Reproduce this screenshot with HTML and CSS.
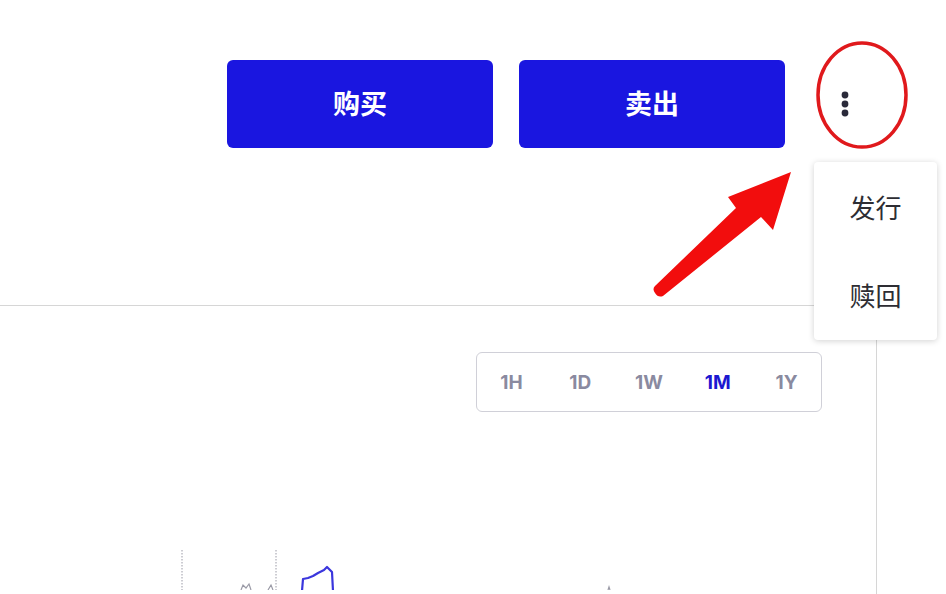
FILE: index.html
```html
<!DOCTYPE html>
<html lang="zh">
<head>
<meta charset="utf-8">
<title>Trade</title>
<link rel="stylesheet" href="styles.css">
</head>
<body>
<div class="page">
  <header class="topbar">
    <button class="btn">购买</button>
    <button class="btn">卖出</button>
    <div class="kebab">
      <svg class="dots" width="12" height="30" viewBox="0 0 12 30"><circle cx="6" cy="6" r="3.4"/><circle cx="6" cy="15" r="3.4"/><circle cx="6" cy="24" r="3.4"/></svg>
    </div>
  </header>
  <section class="panel">
    <div class="range-row">
      <div class="range">
        <span class="opt">1H</span>
        <span class="opt">1D</span>
        <span class="opt">1W</span>
        <span class="opt active">1M</span>
        <span class="opt">1Y</span>
      </div>
    </div>
    <svg class="chart" width="876" height="56" viewBox="0 0 876 56">
      <line class="grid" x1="182" y1="16" x2="182" y2="56"/>
      <line class="grid" x1="276" y1="16" x2="276" y2="56"/>
      <path class="tick" d="M241 56 L243 51 L246 54 L249 50 L251 56 M268 56 L271 51 L273 56 M608 56 L609 53 L610 56"/>
      <path class="series" d="M302 57 L303 45 L308 44 L313 42 L318 39 L324 36 L327 33 L332 38 L333 57"/>
    </svg>
  </section>

  <svg class="ring" width="100" height="116" viewBox="0 0 100 116"><ellipse cx="50" cy="58" rx="44" ry="52"/></svg>
  <svg class="arrow" width="160" height="140" viewBox="0 0 160 140">
    <path d="M22 133 Q19 129 22 126 L103 48 L95 37 L158 12 L140 70 L128 57 L30 136 Q25 138 22 133 Z"/>
  </svg>

  <div class="menu">
    <div class="item">发行</div>
    <div class="item">赎回</div>
  </div>
</div>
</body>
</html>
```
FILE: styles.css
```css
html, body {
  margin: 0;
  padding: 0;
  background: #fff;
}
body {
  font-family: Inter, "Noto Sans CJK SC", sans-serif;
  width: 946px;
  height: 594px;
  overflow: hidden;
}
.page {
  position: relative;
  width: 946px;
  height: 594px;
}
.topbar {
  display: flex;
  justify-content: flex-end;
  align-items: center;
  gap: 26px;
  padding: 60px 65px 0 0;
}
.btn {
  width: 266px;
  height: 88px;
  border: none;
  border-radius: 6px;
  background: #1a16e0;
  color: #fff;
  font-family: "Noto Sans CJK SC", sans-serif;
  font-size: 27px;
  font-weight: 700;
  line-height: 1;
  padding: 0 0 4px;
}
.kebab {
  width: 70px;
  height: 88px;
  display: flex;
  align-items: center;
  justify-content: center;
}
.dots {
  fill: #2a2a3a;
  margin-left: -2px;
}
.panel {
  margin-top: 157px;
  width: 876px;
  height: 288px;
  border-top: 1px solid #d6d6d6;
  border-right: 1px solid #d6d6d6;
}
.range-row {
  display: flex;
  justify-content: flex-end;
  padding: 46px 54px 0 0;
}
.range {
  box-sizing: border-box;
  width: 346px;
  display: flex;
  border: 1px solid #d0d0d8;
  border-radius: 6px;
  height: 60px;
  align-items: center;
}
.opt {
  flex: 1;
  text-align: center;
  font-size: 19px;
  font-weight: 700;
  color: #8a8aa0;
}
.opt.active {
  color: #1c18d0;
}
.chart {
  display: block;
  margin-top: 122px;
}
.grid {
  stroke: #9a9aa6;
  stroke-width: 1;
  stroke-dasharray: 1.5 1.5;
}
.tick {
  stroke: #9a9aa6;
  stroke-width: 1.2;
  fill: none;
}
.series {
  stroke: #3a36dd;
  stroke-width: 2.2;
  fill: none;
  stroke-linejoin: round;
}
.ring {
  position: absolute;
  left: 812px;
  top: 37px;
  fill: none;
  stroke: #e0191c;
  stroke-width: 3.5;
}
.arrow {
  position: absolute;
  left: 633px;
  top: 160px;
  fill: #f20d0d;
}
.menu {
  position: absolute;
  left: 814px;
  top: 162px;
  width: 123px;
  height: 178px;
  background: #fff;
  border-radius: 4px;
  box-shadow: 0 1px 6px rgba(0, 0, 0, 0.18);
  display: flex;
  flex-direction: column;
  justify-content: center;
  gap: 52px;
}
.item {
  text-align: center;
  font-family: "Noto Sans CJK SC", sans-serif;
  font-size: 26px;
  line-height: 36px;
  color: #2d2d33;
}
```
